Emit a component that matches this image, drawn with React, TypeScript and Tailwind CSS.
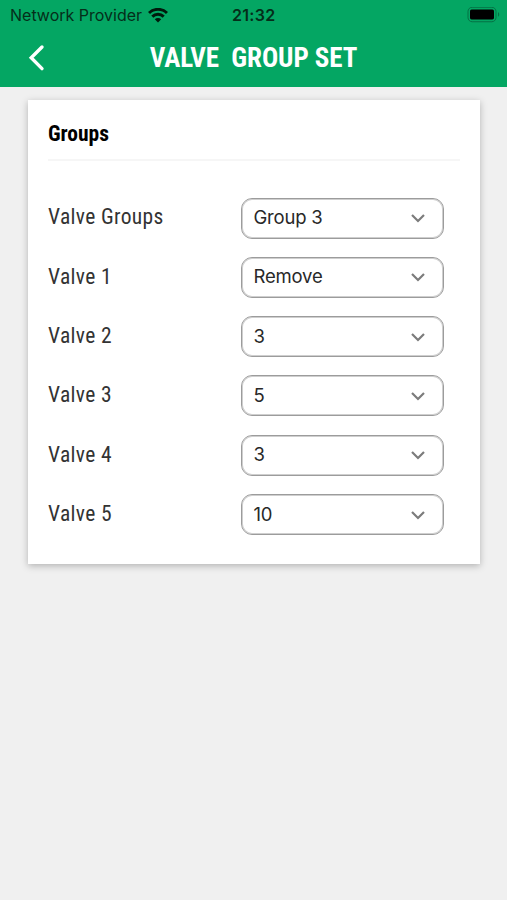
interface Row {
  label: string
  value: string
}

const ROWS: Row[] = [
  { label: 'Valve Groups', value: 'Group 3' },
  { label: 'Valve 1', value: 'Remove' },
  { label: 'Valve 2', value: '3' },
  { label: 'Valve 3', value: '5' },
  { label: 'Valve 4', value: '3' },
  { label: 'Valve 5', value: '10' },
]

function StatusBar() {
  return (
    <div className="grid h-[30px] grid-cols-[222px_1fr_auto] items-center pl-[10px] pr-[7px] text-[#052e1a]">
      <div className="flex items-center gap-[6px]">
        <span className="whitespace-nowrap text-[16px]">Network Provider</span>
        <svg width="20" height="15" viewBox="0 0 20 15" fill="none" stroke="#00190c" strokeWidth="2.9">
          <path d="M1 5a12.8 12.8 0 0 1 18 0" />
          <path d="M4.3 8.6a8.1 8.1 0 0 1 11.4 0" />
          <path d="M10 14.4 6.8 11.2a4.6 4.6 0 0 1 6.4 0Z" fill="#00190c" stroke="none" />
        </svg>
      </div>
      <span className="text-[16px] font-semibold tracking-[0.3px]">21:32</span>
      <svg width="33" height="16" viewBox="0 0 33 16" fill="none">
        <rect x="1" y="0.25" width="28" height="14.5" rx="4.2" stroke="#047044" />
        <rect x="3" y="2.6" width="24" height="9.8" rx="1.6" fill="#000" />
        <path d="M31 5.3c1.6.6 1.6 3.8 0 4.4Z" fill="#047044" />
      </svg>
    </div>
  )
}

function Select({ value }: { value: string }) {
  return (
    <button className="flex h-[41px] w-[203px] items-center justify-between rounded-[11px] border border-[#9c9c9c] pl-[11.5px] pr-[18px] text-[18.5px] tracking-[-0.2px] text-[#282828] shadow-[inset_0_0_0_1px_#cfcfcf]">
      <span>{value}</span>
      <svg width="14" height="10" viewBox="0 0 14 10" fill="none" stroke="#7c7c7c" strokeWidth="2.2">
        <path d="m1 2 6 6 6-6" />
      </svg>
    </button>
  )
}

export default function App() {
  return (
    <div className="min-h-screen bg-[#f0f0f0] font-[Inter,sans-serif]">
      <header className="h-[87px] bg-[#04a663]">
        <StatusBar />
        <div className="grid h-[56px] grid-cols-[1fr_auto_1fr] items-center">
          <svg className="ml-[27px]" width="18" height="28" viewBox="0 0 18 28" fill="none" stroke="#fff" strokeWidth="3.4" strokeLinecap="round">
            <path d="M15 3 4.2 13.8 15 24.6" />
          </svg>
          <h1 className="whitespace-pre font-['Roboto_Condensed',Roboto,sans-serif] text-[27px] font-bold tracking-[-0.08px] text-white font-stretch-condensed">
            VALVE  GROUP SET
          </h1>
        </div>
      </header>
      <main className="mx-[28px] mt-[13px] h-[464px] w-[452px] bg-white px-5 shadow-[0_2px_7px_rgba(0,0,0,0.26)]">
        <div className="flex h-[61px] items-center border-b-2 border-[#f6f6f6] pt-[10px]">
          <h2 className="font-['Roboto_Condensed',Roboto,sans-serif] text-[21.5px] font-bold font-stretch-condensed">Groups</h2>
        </div>
        <div className="pr-4 pt-[27.4px]">
          {ROWS.map((row) => (
            <div key={row.label} className="flex h-[59.3px] items-center justify-between">
              <span className="pb-px font-['Roboto_Condensed',Roboto,sans-serif] text-[21.5px] tracking-[0.34px] text-[#333] font-stretch-condensed">
                {row.label}
              </span>
              <Select value={row.value} />
            </div>
          ))}
        </div>
      </main>
    </div>
  )
}
